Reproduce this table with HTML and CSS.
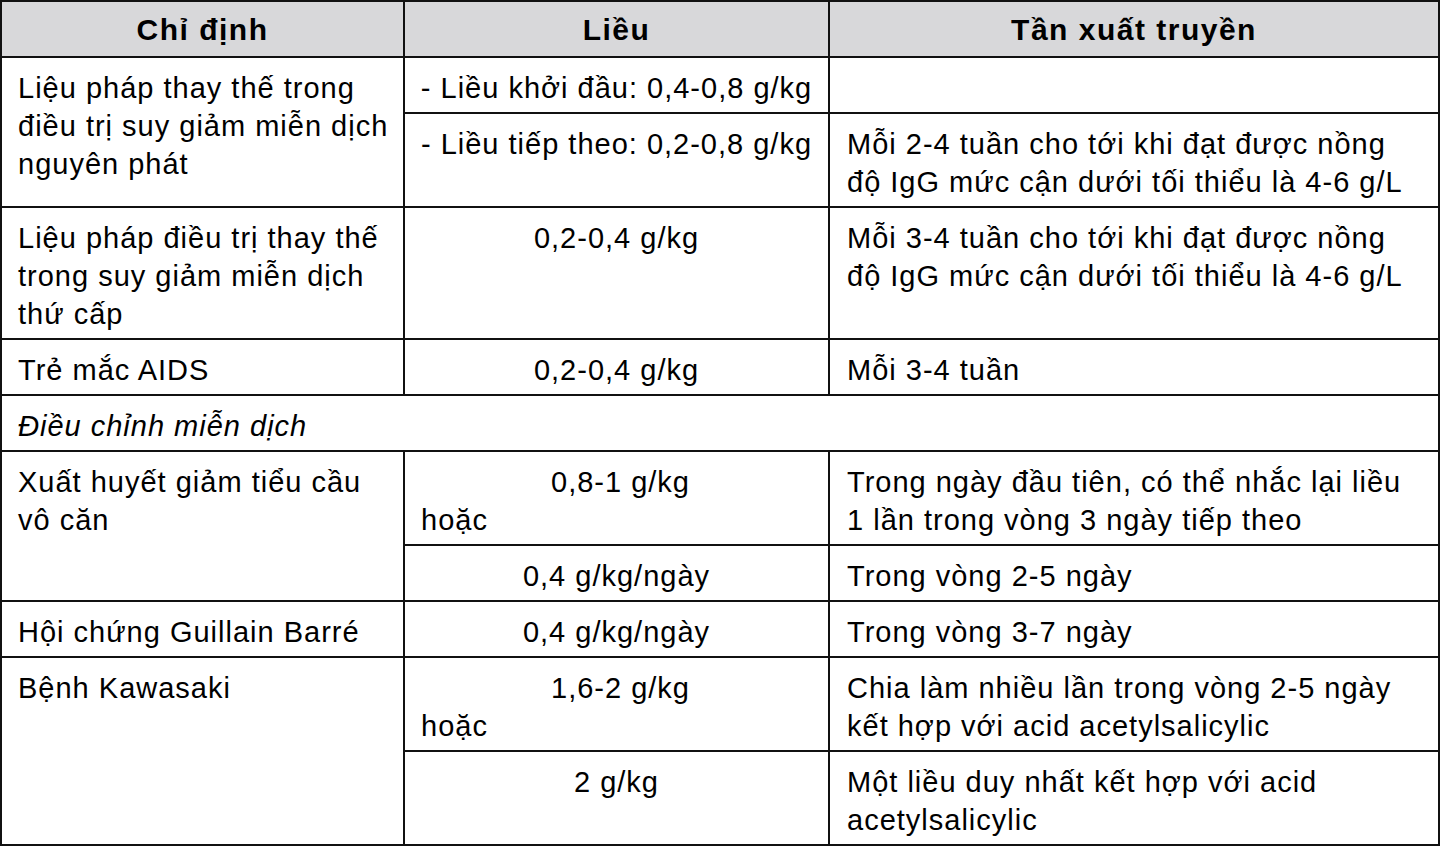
FILE: index.html
```html
<!DOCTYPE html>
<html lang="vi">
<head>
<meta charset="utf-8">
<title>Liều dùng</title>
<link rel="stylesheet" href="styles.css">
</head>
<body>
<table class="dose">
  <colgroup>
    <col class="c1">
    <col class="c2">
    <col class="c3">
  </colgroup>
  <thead>
    <tr>
      <th>Chỉ định</th>
      <th>Liều</th>
      <th>Tần xuất truyền</th>
    </tr>
  </thead>
  <tbody>
    <tr>
      <td class="a" rowspan="2">Liệu pháp thay thế trong điều trị suy giảm miễn dịch nguyên phát</td>
      <td class="b mid">- Liều khởi đầu: 0,4-0,8 g/kg</td>
      <td class="c"></td>
    </tr>
    <tr>
      <td class="b mid">- Liều tiếp theo: 0,2-0,8 g/kg</td>
      <td class="c">Mỗi 2-4 tuần cho tới khi đạt được nồng độ IgG mức cận dưới tối thiểu là 4-6 g/L</td>
    </tr>
    <tr>
      <td class="a">Liệu pháp điều trị thay thế trong suy giảm miễn dịch thứ cấp</td>
      <td class="b mid">0,2-0,4 g/kg</td>
      <td class="c">Mỗi 3-4 tuần cho tới khi đạt được nồng độ IgG mức cận dưới tối thiểu là 4-6 g/L</td>
    </tr>
    <tr>
      <td class="a">Trẻ mắc AIDS</td>
      <td class="b mid">0,2-0,4 g/kg</td>
      <td class="c">Mỗi 3-4 tuần</td>
    </tr>
    <tr>
      <td colspan="3" class="a group">Điều chỉnh miễn dịch</td>
    </tr>
    <tr>
      <td class="a" rowspan="2">Xuất huyết giảm tiểu cầu vô căn</td>
      <td class="b"><span class="ctr">0,8-1 g/kg</span><span class="alt">hoặc</span></td>
      <td class="c">Trong ngày đầu tiên, có thể nhắc lại liều 1 lần trong vòng 3 ngày tiếp theo</td>
    </tr>
    <tr>
      <td class="b mid">0,4 g/kg/ngày</td>
      <td class="c">Trong vòng 2-5 ngày</td>
    </tr>
    <tr>
      <td class="a">Hội chứng Guillain Barré</td>
      <td class="b mid">0,4 g/kg/ngày</td>
      <td class="c">Trong vòng 3-7 ngày</td>
    </tr>
    <tr>
      <td class="a" rowspan="2">Bệnh Kawasaki</td>
      <td class="b"><span class="ctr">1,6-2 g/kg</span><span class="alt">hoặc</span></td>
      <td class="c">Chia làm nhiều lần trong vòng 2-5 ngày kết hợp với acid acetylsalicylic</td>
    </tr>
    <tr>
      <td class="b mid">2 g/kg</td>
      <td class="c">Một liều duy nhất kết hợp với acid acetylsalicylic</td>
    </tr>
  </tbody>
</table>
</body>
</html>
```

FILE: styles.css
```css
html, body {
  margin: 0;
  padding: 0;
  background: #ffffff;
}

body {
  font-family: "Liberation Sans", Arial, "Noto Sans", sans-serif;
  color: #000000;
}

.dose {
  width: 1440px;
  box-sizing: border-box;
  border-collapse: separate;
  border-spacing: 0;
  border-top: 2px solid #111111;
  border-left: 2px solid #111111;
  table-layout: fixed;
  font-size: 29px;
  line-height: 38px;
  letter-spacing: 1px;
}

.c1 { width: 403px; }
.c2 { width: 425px; }
.c3 { width: 610px; }

.dose th,
.dose td {
  border-right: 2px solid #111111;
  border-bottom: 2px solid #111111;
  vertical-align: top;
  text-align: left;
}

.dose th {
  background: #d8d8da;
  font-weight: bold;
  font-size: 30px;
  letter-spacing: 1.5px;
  text-align: center;
  padding: 9px 8px 7px;
}

.dose td {
  padding: 11px 8px 5px 16px;
}

.dose td.a {
  padding-right: 4px;
}

.dose td.c {
  padding-left: 17px;
  padding-right: 27px;
}

.dose td.mid {
  text-align: center;
  padding-left: 8px;
}

.ctr {
  display: block;
  text-align: center;
}

.alt {
  display: block;
}

.group {
  font-style: italic;
}
```
